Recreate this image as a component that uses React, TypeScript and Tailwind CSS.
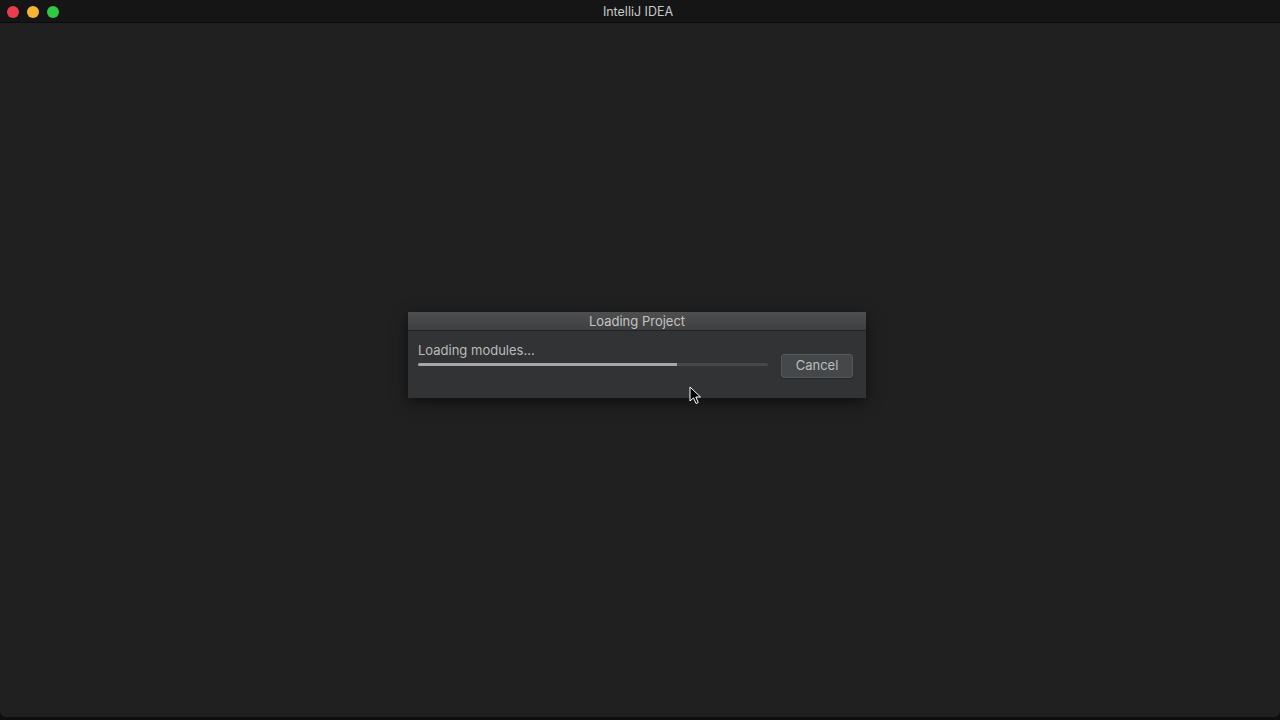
import React from "react";

const font = { fontFamily: '"Inter", "Liberation Sans", sans-serif' };

function Cursor() {
    return (
        <svg width="14" height="20" viewBox="0 0 14 20" className="absolute left-[689px] top-[386px]">
            <path d="M1 1 L1 15 L4.5 11.8 L7 17.5 L9.2 16.5 L6.8 11 L11.5 11 Z" fill="#000" stroke="#fff" strokeWidth="1" strokeLinejoin="round" />
        </svg>
    );
}

export default function App() {
    const progress = 74;

    return (
        <div className="relative w-[1280px] h-[720px] bg-[#0e0e0e] overflow-hidden" style={font}>
            <div className="flex flex-col h-[717px] bg-[#202020] rounded-b-[6px]">
                {/* title bar */}
                <div className="relative h-[23px] bg-[#151515] border-b border-[#0b0b0b] flex items-center justify-center shrink-0">
                    <div className="absolute left-[7px] top-[6px] flex gap-[8px]">
                        <span className="w-[12px] h-[12px] rounded-full bg-[#ec3c4f]" />
                        <span className="w-[12px] h-[12px] rounded-full bg-[#f6b431]" />
                        <span className="w-[12px] h-[12px] rounded-full bg-[#2fc946]" />
                    </div>
                    <span className="text-[12.5px] text-[#c9c9c9] mt-[2px] ml-[-4px]">IntelliJ IDEA</span>
                </div>

                {/* content */}
                <div className="flex-1 flex justify-center pt-[289px]">
                    <div className="w-[458px] h-[86px] flex flex-col bg-[#313335] shadow-[0_4px_14px_rgba(0,0,0,0.55)] ml-[-6px]">
                        <div className="h-[19px] flex items-center justify-center bg-gradient-to-b from-[#4e4f50] to-[#3e3f40] border-b border-[#222325]">
                            <span className="text-[13px] text-[#c4c4c4] mt-[1px]">Loading Project</span>
                        </div>
                        <div className="flex items-start pl-[10px] pr-[13px] pt-[10px]">
                            <div className="w-[350px] flex flex-col">
                                <span className="text-[13px] text-[#bcbcbc] leading-[16px] mt-[1px]">Loading modules...</span>
                                <div className="mt-[5px] h-[3px] bg-[#46494b] rounded-full overflow-hidden">
                                    <div className="h-full bg-[#a7a7a7]" style={{ width: `${progress}%` }} />
                                </div>
                            </div>
                            <button className="ml-auto mt-[13px] w-[72px] h-[24px] bg-[#45484a] border border-[#55585a] rounded-[3px] text-[13px] text-[#bdbdbd] shadow-[0_1px_1px_rgba(0,0,0,0.3)]">
                                Cancel
                            </button>
                        </div>
                    </div>
                </div>
            </div>
            <Cursor />
        </div>
    );
}
